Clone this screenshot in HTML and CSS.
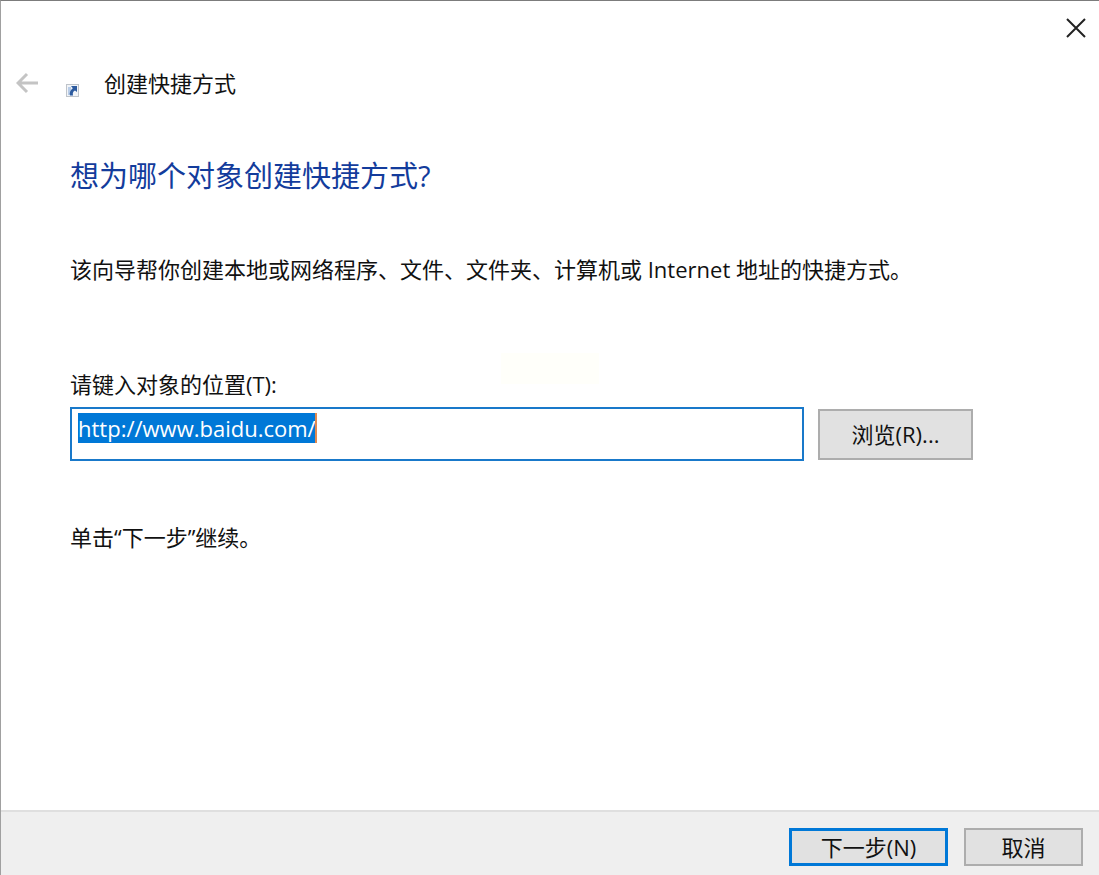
FILE: index.html
```html
<!DOCTYPE html>
<html lang="zh-CN">
<head>
    <meta charset="UTF-8">
    <meta name="viewport" content="width=device-width, initial-scale=1.0">
    <title>创建快捷方式</title>
    <link rel="stylesheet" href="styles.css">
</head>
<body>
    <form class="wizard" id="wizard">
        <div class="titlebar">
            <button type="button" class="icon-button" aria-label="关闭">
                <svg width="20" height="20" viewBox="0 0 20 20" fill="none" stroke="#222" stroke-width="2">
                    <path d="M1 1L19 19M19 1L1 19"/>
                </svg>
            </button>
        </div>

        <header class="header">
            <button type="button" class="icon-button" aria-label="返回" disabled>
                <svg width="24" height="22" viewBox="0 0 24 22" fill="none" stroke="#c4c4c4" stroke-width="3">
                    <path d="M11 2L2 11L11 20M2 11H22"/>
                </svg>
            </button>
            <svg class="shortcut-icon" width="13" height="13" viewBox="0 0 13 13">
                <rect x="0.5" y="0.5" width="12" height="12" fill="#f1f4f8" stroke="#bfc4ca"/>
                <path d="M2 3H5V11H2Z" fill="#b9cde8"/>
                <path d="M5 2H11V8L9 6.500C7 7.500 6.500 9 7 11.500H4C3 8.500 4.500 6 6.800 4.200Z" fill="#2d5b9f"/>
            </svg>
            <span>创建快捷方式</span>
        </header>

        <main class="content">
            <h1>想为哪个对象创建快捷方式?</h1>
            <p class="intro">该向导帮你创建本地或网络程序、文件、文件夹、计算机或 Internet 地址的快捷方式。</p>
            <label for="location">请键入对象的位置(T):</label>
            <div class="location-row">
                <div class="field">
                    <input type="text" id="location" value="http://www.baidu.com/" spellcheck="false" autocomplete="off">
                    <span class="caret"></span>
                </div>
                <button type="button" class="browse">浏览(R)...</button>
            </div>
            <p class="hint">单击“下一步”继续。</p>
            <div class="tip"></div>
        </main>

        <footer class="footer">
            <button type="submit" class="next">下一步(N)</button>
            <button type="button" class="cancel">取消</button>
        </footer>
    </form>

    <script>
        const locationInput = document.getElementById("location");
        locationInput.focus();
        locationInput.select();

        document.getElementById("wizard").addEventListener("submit", function (event) {
            event.preventDefault();
        });
    </script>
</body>
</html>
```
FILE: styles.css
```css
* {
    box-sizing: border-box;
}

body {
    margin: 0;
    background-color: #fff;
    color: #111;
    font-family: "Open Sans", "Noto Sans CJK SC", sans-serif;
    font-size: 22px;
    line-height: 30px;
}

.wizard {
    display: flex;
    flex-direction: column;
    min-height: 100vh;
    border-top: 1px solid #7c7c7c;
    border-left: 1px solid #a0a0a0;
}

button,
input {
    font: inherit;
    color: inherit;
}

button {
    padding: 0;
    background-color: #e1e1e1;
    border: 2px solid #adadad;
}

.icon-button {
    display: flex;
    background: none;
    border: none;
}

.titlebar {
    display: flex;
    justify-content: flex-end;
    padding: 17px 13px 0 0;
}

.header {
    display: flex;
    align-items: center;
    margin-top: 30px;
    padding-left: 15px;
}

.shortcut-icon {
    margin: 14px 25px 0 26px;
}

.content {
    position: relative;
    flex: 1;
    padding: 0 126px 0 69px;
}

h1 {
    margin: 58px 0 0;
    color: #133c9c;
    font-size: 29px;
    font-weight: 400;
    line-height: 40px;
}

p {
    margin: 0;
}

.intro {
    margin-top: 58px;
}

label {
    display: block;
    margin-top: 85px;
}

.location-row {
    display: flex;
    align-items: center;
    gap: 14px;
    margin-top: 8px;
}

.field {
    position: relative;
    flex: 1;
}

.field input {
    display: block;
    width: 100%;
    height: 54px;
    padding: 0 6px 12px;
    background-color: #fff;
    border: 2px solid #1979ca;
    border-radius: 0;
    outline: none;
}

.field input::selection {
    background-color: #0078d7;
    color: #fff;
}

.caret {
    position: absolute;
    top: 6px;
    left: 245px;
    width: 2px;
    height: 30px;
    background-color: #e08a50;
}

.browse {
    width: 155px;
    height: 51px;
}

.hint {
    margin-top: 61px;
}

.tip {
    position: absolute;
    top: 255px;
    left: 500px;
    width: 98px;
    height: 31px;
    background-color: #fffffa;
}

.footer {
    display: flex;
    justify-content: flex-end;
    gap: 16px;
    padding: 16px 16px 9px;
    background-color: #efefef;
    border-top: 2px solid #dfdfdf;
}

.footer button {
    height: 38px;
    line-height: 28px;
}

.footer .next {
    width: 159px;
    border: 3px solid #0078d7;
}

.footer .cancel {
    width: 119px;
}
```
